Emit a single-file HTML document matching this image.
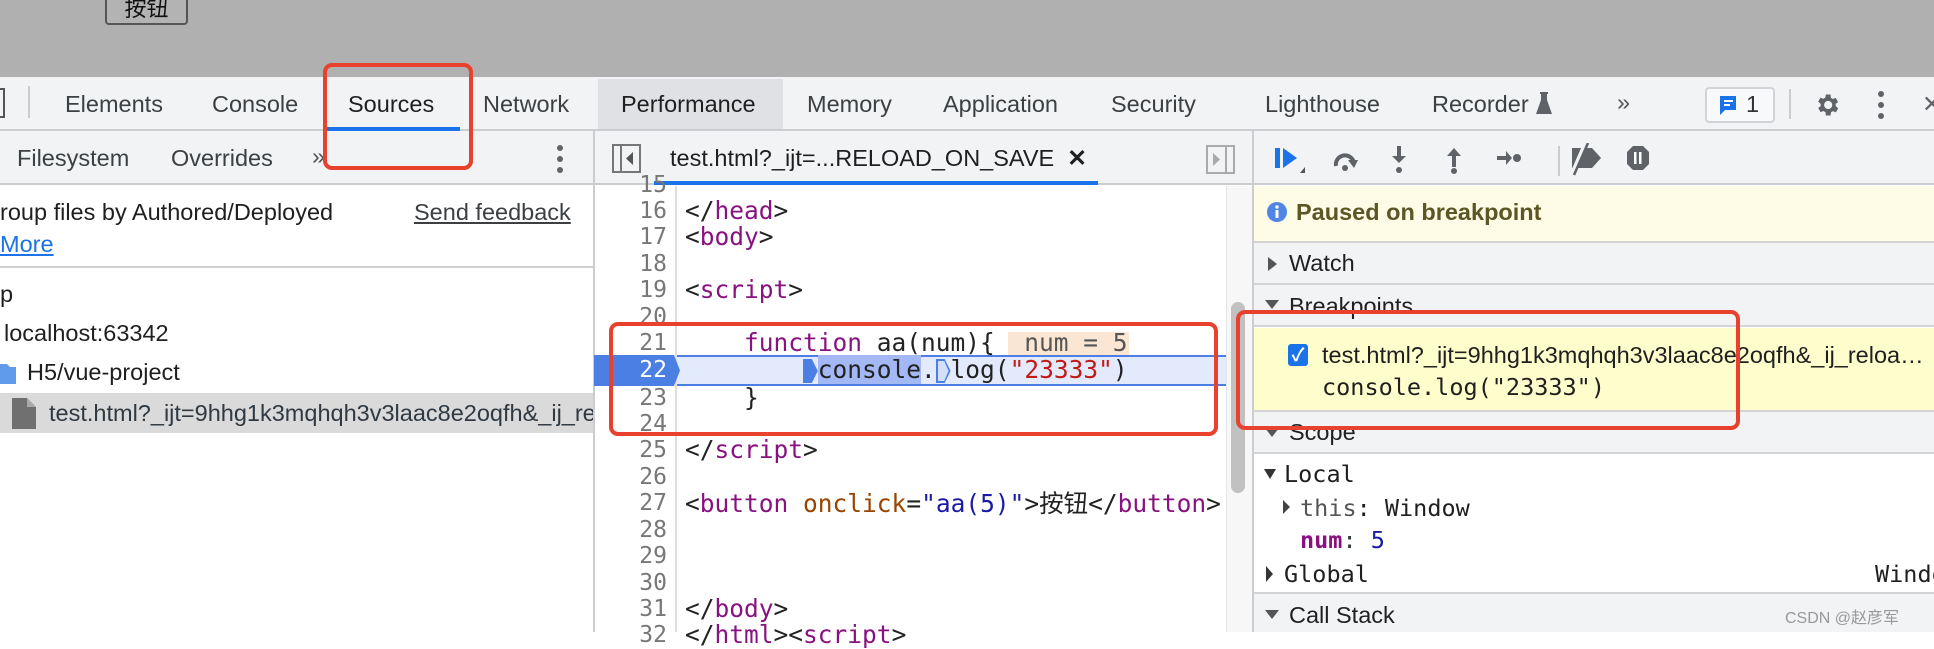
<!DOCTYPE html>
<html><head><meta charset="utf-8"><style>
*{margin:0;padding:0;box-sizing:border-box}
body{width:1934px;height:632px;overflow:hidden;position:relative;background:#fff;font-family:"Liberation Sans","Noto Sans CJK SC",sans-serif;color:#303942}
.a{position:absolute;white-space:nowrap}
.t{font-size:23.5px;line-height:26px}
.m{font-family:"DejaVu Sans Mono","Liberation Mono",monospace;font-size:23.5px;line-height:26px}
.ln{position:absolute;right:1267px;color:#777;font-family:"DejaVu Sans Mono",monospace;font-size:23px;line-height:26px;text-align:right}
.cd{position:absolute;left:685px;font-family:"DejaVu Sans Mono",monospace;font-size:24.5px;line-height:26px;color:#222;white-space:pre}
.p{color:#881280}.s{color:#c41a16}.at{color:#994500}.av{color:#1a1aa6}
.red{position:absolute;border:4px solid #e8412d;border-radius:9px}
.mk{display:inline-block;width:14.75px;height:24px;vertical-align:-5px;clip-path:polygon(0 0,60% 0,100% 50%,60% 100%,0 100%)}
</style></head><body>
<div class="a" style="left:0;top:0;width:1934px;height:77px;background:#b0b0b0"></div>
<div class="a" style="left:105px;top:-6px;width:83px;height:31px;border:2px solid #555;border-radius:4px;background:#b3b3b3;font-size:22px;text-align:center;line-height:22px;font-family:'Noto Sans CJK SC',sans-serif;color:#111">按钮</div>
<div class="a" style="left:0;top:77px;width:1934px;height:54px;background:#f1f3f4;border-bottom:2px solid #cbcdd1"></div>
<div class="a" style="left:598px;top:79px;width:185px;height:50px;background:#dfe1e5"></div>
<div class="a" style="left:0;top:88px;width:5px;height:30px;border:2px solid #555;border-left:none"></div>
<div class="a" style="left:28px;top:86px;width:2px;height:32px;background:#ccc"></div>
<div class="a t" style="left:65px;top:91px;color:#3c4043">Elements</div>
<div class="a t" style="left:212px;top:91px;color:#3c4043">Console</div>
<div class="a t" style="left:348px;top:91px;color:#1f1f1f">Sources</div>
<div class="a" style="left:323px;top:127px;width:137px;height:4px;background:#1a73e8"></div>
<div class="a t" style="left:483px;top:91px;color:#3c4043">Network</div>
<div class="a t" style="left:621px;top:91px;color:#1f1f1f">Performance</div>
<div class="a t" style="left:807px;top:91px;color:#3c4043">Memory</div>
<div class="a t" style="left:943px;top:91px;color:#3c4043">Application</div>
<div class="a t" style="left:1111px;top:91px;color:#3c4043">Security</div>
<div class="a t" style="left:1265px;top:91px;color:#3c4043">Lighthouse</div>
<div class="a t" style="left:1432px;top:91px;color:#3c4043">Recorder</div>
<svg class="a" style="left:1536px;top:92px" width="16" height="22"><path d="M4 0h8v2h-1v6l5 14H0L5 8V2H4z" fill="#5f6368"/></svg>
<div class="a t" style="left:1617px;top:89px;color:#555">»</div>
<div class="a" style="left:1705px;top:87px;width:70px;height:36px;border:2px solid #d0d3d7;border-radius:4px;background:#f8f9fa"></div>
<svg class="a" style="left:1718px;top:95px" width="20" height="22"><path d="M2 1h16v14H7l-5 5z" fill="#1a73e8"/><rect x="6" y="5" width="9" height="2" fill="#fff"/><rect x="6" y="9" width="6" height="2" fill="#fff"/></svg>
<div class="a t" style="left:1746px;top:91px;color:#333">1</div>
<div class="a" style="left:1789px;top:89px;width:2px;height:30px;background:#ccc"></div>
<svg class="a" style="left:1813px;top:91px" width="28" height="28" viewBox="0 0 24 24"><path fill="#5f6368" d="M19.4 13a7.5 7.5 0 0 0 0-2l2.1-1.6-2-3.5-2.5 1a7 7 0 0 0-1.7-1L15 3h-4l-.4 2.7a7 7 0 0 0-1.7 1l-2.5-1-2 3.5L6.6 11a7.5 7.5 0 0 0 0 2l-2.1 1.6 2 3.5 2.5-1a7 7 0 0 0 1.7 1L11 21h4l.4-2.7a7 7 0 0 0 1.7-1l2.5 1 2-3.5zM13 15.5a3.5 3.5 0 1 1 0-7 3.5 3.5 0 0 1 0 7z"/></svg>
<svg class="a" style="left:1877px;top:90px" width="8" height="30"><circle cx="4" cy="4" r="3" fill="#5f6368"/><circle cx="4" cy="15" r="3" fill="#5f6368"/><circle cx="4" cy="26" r="3" fill="#5f6368"/></svg>
<div class="a t" style="left:1922px;top:91px;color:#5f6368">✕</div>
<div class="a" style="left:0;top:131px;width:1934px;height:54px;background:#f1f3f4;border-bottom:2px solid #cbcdd1"></div>
<div class="a" style="left:593px;top:131px;width:2px;height:501px;background:#cbcdd1"></div>
<div class="a" style="left:1252px;top:131px;width:2px;height:501px;background:#cbcdd1"></div>
<div class="a t" style="left:17px;top:145px;color:#3c4043">Filesystem</div>
<div class="a t" style="left:171px;top:145px;color:#3c4043">Overrides</div>
<div class="a t" style="left:312px;top:143px;color:#555">»</div>
<svg class="a" style="left:556px;top:144px" width="8" height="30"><circle cx="4" cy="4" r="3" fill="#5f6368"/><circle cx="4" cy="15" r="3" fill="#5f6368"/><circle cx="4" cy="26" r="3" fill="#5f6368"/></svg>
<svg class="a" style="left:612px;top:144px" width="30" height="30"><rect x="1" y="1" width="27" height="27" fill="none" stroke="#777" stroke-width="2"/><line x1="9" y1="1" x2="9" y2="28" stroke="#777" stroke-width="2"/><path d="M21 8v13l-7-6.5z" fill="#555"/></svg>
<div class="a t" style="left:670px;top:145px;color:#1f1f1f">test.html?_ijt=...RELOAD_ON_SAVE&nbsp;&nbsp;<b>✕</b></div>
<div class="a" style="left:654px;top:181px;width:444px;height:4px;background:#1a73e8"></div>
<svg class="a" style="left:1206px;top:145px" width="30" height="30"><rect x="1" y="1" width="27" height="27" fill="none" stroke="#aaa" stroke-width="2"/><line x1="20" y1="1" x2="20" y2="28" stroke="#aaa" stroke-width="2"/><path d="M7 8v13l7-6.5z" fill="#aaa"/></svg>
<svg class="a" style="left:1272px;top:143px" width="420" height="36">
<rect x="3" y="5" width="5" height="20" fill="#1a73e8"/><path d="M11 5l14 10-14 10z" fill="#1a73e8"/><path d="M28 30l5-6v6z" fill="#555"/>
<path d="M64 23a9 9 0 0 1 18-3" fill="none" stroke="#5f6368" stroke-width="4"/><path d="M76 17h10l-4 8z" fill="#5f6368"/><circle cx="73" cy="25" r="3" fill="#5f6368"/>
<rect x="125" y="3" width="4" height="12" fill="#5f6368"/><path d="M120 13h14l-7 7z" fill="#5f6368"/><circle cx="127" cy="27" r="3" fill="#5f6368"/>
<rect x="180" y="12" width="4" height="12" fill="#5f6368"/><path d="M175 13h14l-7-8z" fill="#5f6368"/><circle cx="182" cy="28" r="3" fill="#5f6368"/>
<rect x="225" y="13" width="11" height="4" fill="#5f6368"/><path d="M234 8v14l6-7z" fill="#5f6368"/><circle cx="245" cy="15" r="4" fill="#5f6368"/>
<rect x="286" y="3" width="2" height="30" fill="#ccc"/>
<path d="M300 5h20l9 10-9 10h-20z" fill="#5f6368"/><path d="M300 32l14-32" stroke="#f1f3f4" stroke-width="5"/><path d="M302 32l14-32" stroke="#5f6368" stroke-width="2.5"/>
<path d="M361 3h10l6 6v12l-6 6h-10l-6-6v-12z" fill="#5f6368"/><rect x="362" y="9" width="2.5" height="12" fill="#fff"/><rect x="367" y="9" width="2.5" height="12" fill="#fff"/>
</svg>
<div class="a t" style="left:0;top:199px;color:#1f1f1f">roup files by Authored/Deployed</div>
<div class="a t" style="left:414px;top:199px;color:#3c4043;text-decoration:underline">Send feedback</div>
<div class="a t" style="left:0;top:231px;color:#1a73e8;text-decoration:underline">More</div>
<div class="a" style="left:0;top:266px;width:593px;height:2px;background:#d0d0d0"></div>
<div class="a t" style="left:0;top:281px;color:#1f1f1f">p</div>
<div class="a t" style="left:4px;top:320px;color:#1f1f1f">localhost:63342</div>
<svg class="a" style="left:0;top:362px" width="16" height="22"><path d="M0 2h7l3 3h6v17H0z" fill="#5f9be8"/></svg>
<div class="a t" style="left:27px;top:359px;color:#1f1f1f">H5/vue-project</div>
<div class="a" style="left:0;top:393px;width:593px;height:40px;background:#dadada"></div>
<svg class="a" style="left:12px;top:398px" width="24" height="31"><path d="M0 0h15l9 9v22H0z" fill="#707070"/><path d="M15 0v9h9" fill="#aaa"/></svg>
<div class="a t" style="left:49px;top:400px;color:#303942;width:544px;overflow:hidden">test.html?_ijt=9hhg1k3mqhqh3v3laac8e2oqfh&amp;_ij_reload</div>
<div class="a" style="left:675px;top:186px;width:2px;height:446px;background:#ddd"></div>
<div class="a" style="left:1226px;top:186px;width:26px;height:446px;background:#f7f7f7;border-left:1px solid #e5e5e5"></div>
<div class="a" style="left:1231px;top:302px;width:14px;height:191px;background:#c1c1c1;border-radius:7px"></div>
<div class="ln" style="top:172px">15</div>
<div class="ln" style="top:198px">16</div><div class="cd" style="top:198px">&lt;/<span class="p">head</span>&gt;</div>
<div class="ln" style="top:224px">17</div><div class="cd" style="top:224px">&lt;<span class="p">body</span>&gt;</div>
<div class="ln" style="top:251px">18</div>
<div class="ln" style="top:277px">19</div><div class="cd" style="top:277px">&lt;<span class="p">script</span>&gt;</div>
<div class="ln" style="top:304px">20</div>
<div class="a" style="left:1008px;top:332px;width:121px;height:24px;background:#fbe6d4"></div>
<div class="ln" style="top:330px">21</div><div class="cd" style="top:330px">    <span class="p">function</span> aa(num){  <span style="color:#555">num = 5</span></div>
<div class="a" style="left:677px;top:355px;width:549px;height:31px;background:#e3eafc;border-top:2px solid #4c7fe4;border-bottom:2px solid #4c7fe4"></div>
<svg class="a" style="left:594px;top:355px" width="90" height="31"><path d="M0 0h80l6 15.5-6 15.5H0z" fill="#4c7fe4"/></svg>
<div class="ln" style="top:357px;color:#fff">22</div>
<div class="cd" style="top:357px">        <span class="mk" style="background:#4c7fe4"></span><span style="background:#a3b8f5">console</span>.<span class="mk" style="background:#4c7fe4;padding:2px"><span style="display:block;width:100%;height:100%;background:#d3def9;clip-path:polygon(0 0,60% 0,100% 50%,60% 100%,0 100%)"></span></span>log(<span class="s">"23333"</span>)</div>
<div class="ln" style="top:385px">23</div><div class="cd" style="top:385px">    }</div>
<div class="ln" style="top:411px">24</div>
<div class="ln" style="top:437px">25</div><div class="cd" style="top:437px">&lt;/<span class="p">script</span>&gt;</div>
<div class="ln" style="top:464px">26</div>
<div class="ln" style="top:490px">27</div><div class="cd" style="top:490px">&lt;<span class="p">button</span> <span class="at">onclick</span>=<span class="av">"aa(5)"</span>&gt;<span style="font-family:'Noto Sans CJK SC',sans-serif">按钮</span>&lt;/<span class="p">button</span>&gt;</div>
<div class="ln" style="top:517px">28</div>
<div class="ln" style="top:543px">29</div>
<div class="ln" style="top:570px">30</div>
<div class="ln" style="top:596px">31</div><div class="cd" style="top:596px">&lt;/<span class="p">body</span>&gt;</div>
<div class="ln" style="top:622px">32</div><div class="cd" style="top:622px">&lt;/<span class="p">html</span>&gt;&lt;<span class="p">script</span>&gt;</div>
<div class="a" style="left:1254px;top:186px;width:680px;height:57px;background:#fefbe6;border-bottom:2px solid #d4d4d4"></div>
<svg class="a" style="left:1266px;top:201px" width="22" height="22"><circle cx="11" cy="11" r="10" fill="#4f86e6"/><rect x="9.5" y="9" width="3" height="8" fill="#fff"/><circle cx="11" cy="6" r="1.7" fill="#fff"/></svg>
<div class="a t" style="left:1296px;top:199px;color:#5c5525;font-weight:bold">Paused on breakpoint</div>
<div class="a" style="left:1254px;top:243px;width:680px;height:42px;background:#f1f3f4;border-bottom:2px solid #d4d4d4"></div>
<div class="a" style="left:1268px;top:257px;border-left:9px solid #555;border-top:7px solid transparent;border-bottom:7px solid transparent"></div>
<div class="a t" style="left:1289px;top:250px;color:#1f1f1f">Watch</div>
<div class="a" style="left:1254px;top:285px;width:680px;height:42px;background:#f1f3f4;border-bottom:2px solid #d4d4d4"></div>
<div class="a" style="left:1265px;top:300px;border-top:9px solid #555;border-left:7px solid transparent;border-right:7px solid transparent"></div>
<div class="a t" style="left:1289px;top:293px;color:#1f1f1f">Breakpoints</div>
<div class="a" style="left:1254px;top:328px;width:680px;height:84px;background:#fefdcc;border-bottom:2px solid #d4d4d4"></div>
<div class="a" style="left:1288px;top:344px;width:20px;height:22px;background:#1a73e8;border-radius:3px;color:#fff;font-size:18px;line-height:22px;text-align:center;font-weight:bold">✓</div>
<div class="a t" style="left:1322px;top:342px;color:#1f1f1f">test.html?_ijt=9hhg1k3mqhqh3v3laac8e2oqfh&amp;_ij_reloa…</div>
<div class="a m" style="left:1322px;top:374px;color:#1f1f1f">console.log("23333")</div>
<div class="a" style="left:1254px;top:412px;width:680px;height:42px;background:#f1f3f4;border-bottom:2px solid #d4d4d4"></div>
<div class="a" style="left:1265px;top:428px;border-top:9px solid #555;border-left:7px solid transparent;border-right:7px solid transparent"></div>
<div class="a t" style="left:1289px;top:419px;color:#1f1f1f">Scope</div>
<div class="a" style="left:1264px;top:469px;border-top:10px solid #333;border-left:6px solid transparent;border-right:6px solid transparent"></div>
<div class="a m" style="left:1284px;top:461px;color:#1f1f1f">Local</div>
<div class="a" style="left:1283px;top:500px;border-left:7px solid #444;border-top:7px solid transparent;border-bottom:7px solid transparent"></div>
<div class="a m" style="left:1300px;top:495px;color:#1f1f1f"><span style="color:#555">this</span>: Window</div>
<div class="a m" style="left:1300px;top:527px"><span class="p" style="font-weight:bold">num</span>: <span class="av">5</span></div>
<div class="a" style="left:1266px;top:566px;border-left:7px solid #333;border-top:8px solid transparent;border-bottom:8px solid transparent"></div>
<div class="a m" style="left:1284px;top:561px;color:#1f1f1f">Global</div>
<div class="a m" style="left:1875px;top:561px;color:#1f1f1f">Window</div>
<div class="a" style="left:1254px;top:592px;width:680px;height:40px;background:#f1f3f4;border-top:2px solid #d4d4d4"></div>
<div class="a" style="left:1265px;top:610px;border-top:9px solid #555;border-left:7px solid transparent;border-right:7px solid transparent"></div>
<div class="a t" style="left:1289px;top:602px;color:#1f1f1f">Call Stack</div>
<div class="a" style="left:1785px;top:604px;font-size:16px;color:#999;font-family:'Liberation Sans','Noto Sans CJK SC',sans-serif">CSDN @赵彦军</div>
<div class="red" style="left:323px;top:63px;width:150px;height:107px"></div>
<div class="red" style="left:609px;top:322px;width:609px;height:114px"></div>
<div class="red" style="left:1236px;top:310px;width:504px;height:120px"></div>
</body></html>
